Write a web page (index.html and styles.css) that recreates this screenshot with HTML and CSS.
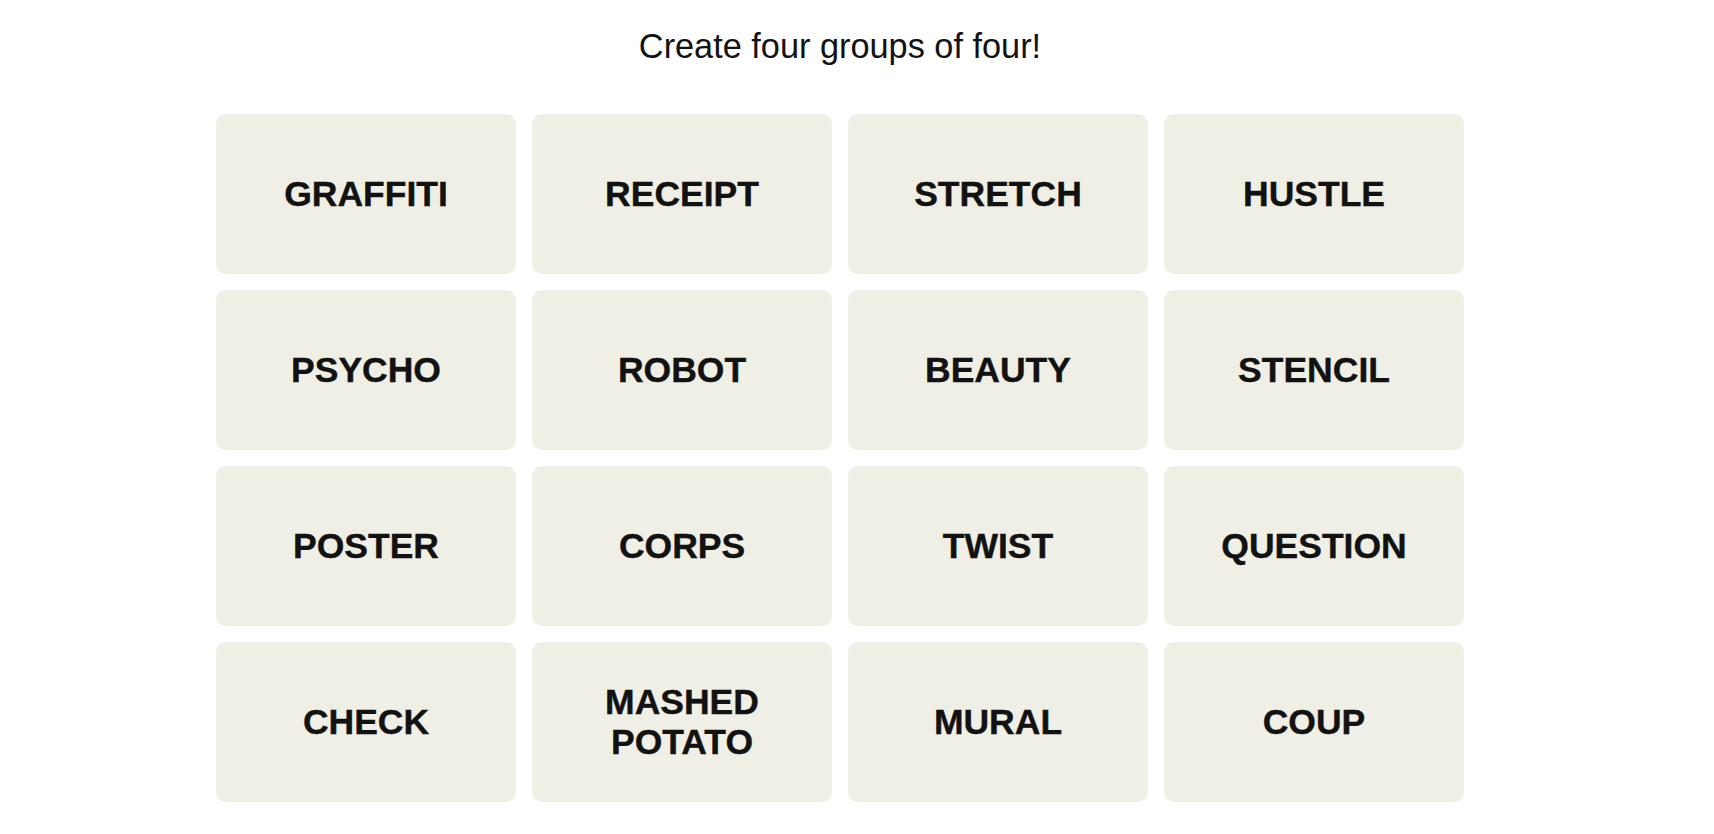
FILE: index.html
```html
<!DOCTYPE html>
<html lang="en">
<head>
<meta charset="utf-8">
<title>Connections</title>
<link rel="stylesheet" href="styles.css">
</head>
<body>
<main class="game">
  <h2 class="prompt">Create four groups of four!</h2>
  <section class="board">
    <button class="tile">GRAFFITI</button>
    <button class="tile">RECEIPT</button>
    <button class="tile">STRETCH</button>
    <button class="tile">HUSTLE</button>
    <button class="tile">PSYCHO</button>
    <button class="tile">ROBOT</button>
    <button class="tile">BEAUTY</button>
    <button class="tile">STENCIL</button>
    <button class="tile">POSTER</button>
    <button class="tile">CORPS</button>
    <button class="tile">TWIST</button>
    <button class="tile">QUESTION</button>
    <button class="tile">CHECK</button>
    <button class="tile">MASHED<br>POTATO</button>
    <button class="tile">MURAL</button>
    <button class="tile">COUP</button>
  </section>
</main>
</body>
</html>
```

FILE: styles.css
```css
html, body {
  margin: 0;
  padding: 0;
  background: #ffffff;
}

body {
  font-family: "Liberation Sans", Arial, sans-serif;
  color: #121212;
}

.game {
  width: 1680px;
  display: flex;
  flex-direction: column;
  align-items: center;
}

.prompt {
  margin: 26px 0 0 0;
  font-size: 34.3px;
  line-height: 40px;
  font-weight: 400;
  color: #121212;
  height: 40px;
}

.board {
  margin-top: 48px;
  display: grid;
  grid-template-columns: repeat(4, 300px);
  grid-auto-rows: 160px;
  gap: 16px;
}

.tile {
  display: flex;
  align-items: center;
  justify-content: center;
  text-align: center;
  border: none;
  border-radius: 10px;
  background: #efefe6;
  color: #121212;
  font-family: "Liberation Sans", Arial, sans-serif;
  font-weight: 700;
  font-size: 35.5px;
  line-height: 40px;
  -webkit-text-stroke: 0.4px #121212;
  padding: 0;
  margin: 0;
}
```
